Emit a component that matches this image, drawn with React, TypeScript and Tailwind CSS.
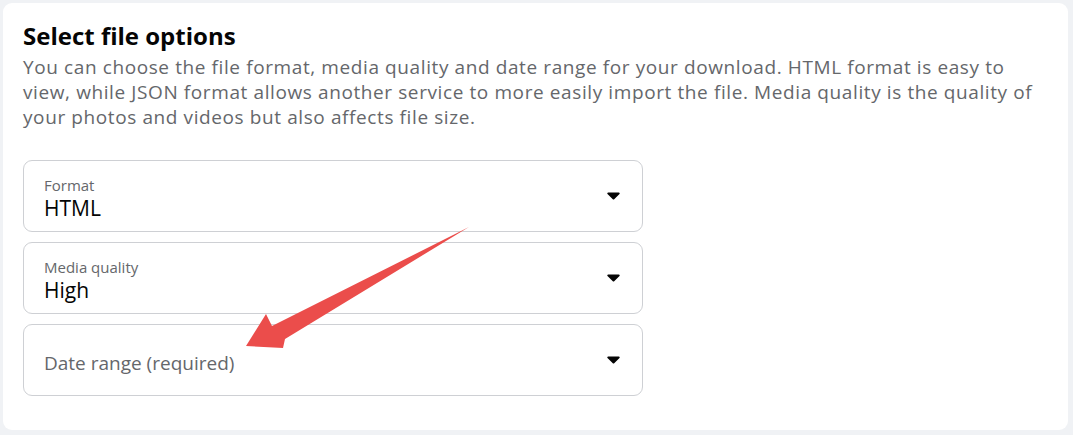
import { useState } from 'react'

const FIELDS = [
  { label: 'Format', value: 'HTML' },
  { label: 'Media quality', value: 'High' },
  { label: '', value: 'Date range (required)' },
]

function Caret() {
  return (
    <svg width="13" height="8" viewBox="0 0 13 8" className="shrink-0">
      <path d="M1.2 0.5h10.6c0.8 0 1.2 0.9 0.7 1.5L7.2 7.2c-0.4 0.4-1 0.4-1.4 0L0.5 2C0 1.4 0.4 0.5 1.2 0.5z" fill="#050505" />
    </svg>
  )
}

function SelectBox({ label, value }: { label: string; value: string }) {
  return (
    <button className="flex h-[72px] w-[620px] items-center rounded-[9px] border border-[#ced0d4] bg-white pl-5 pr-[22px] text-left">
      <div className="flex-1 min-w-0">
        {label ? (
          <div className="pt-[6px]">
            <div className="text-[15px] leading-[19px] text-[#65676b]">{label}</div>
            <div className="text-[21px] leading-[27px] text-[#050505]">{value}</div>
          </div>
        ) : (
          <div className="pt-[6px] text-[19px] leading-[26px] text-[#65676b]">{value}</div>
        )}
      </div>
      <Caret />
    </button>
  )
}

export default function App() {
  const [fields] = useState(FIELDS)

  return (
    <div
      className="relative h-[435px] w-[1073px] bg-[#f0f2f5] pt-[3px] pl-[3px] pr-[5px] pb-[5px]"
      style={{ fontFamily: '"Open Sans", "Noto Sans", sans-serif' }}
    >
      <div className="h-full rounded-[9px] bg-white pl-5 pr-[18px] pt-[17px]">
        <h2 className="text-[24px] font-bold leading-[32px] text-[#050505]">Select file options</h2>
        <p className="mt-[3px] text-[19px] leading-[25px] tracking-[0.6px] text-[#65676b]">
          You can choose the file format, media quality and date range for your download. HTML format is easy to view,
          while JSON format allows another service to more easily import the file. Media quality is the quality of your
          photos and videos but also affects file size.
        </p>

        <div className="mt-[30px] flex flex-col gap-[10px]">
          {fields.map(f => (
            <SelectBox key={f.value} label={f.label} value={f.value} />
          ))}
        </div>
      </div>

      {/* annotation arrow drawn over the page */}
      <svg className="pointer-events-none absolute left-0 top-0" width="1073" height="435" viewBox="0 0 1073 435">
        <path
          d="M246 346 L266 314 L272 326 L469 227 L285 339 L283 348 Z"
          fill="#eb4d4b"
        />
      </svg>
    </div>
  )
}
